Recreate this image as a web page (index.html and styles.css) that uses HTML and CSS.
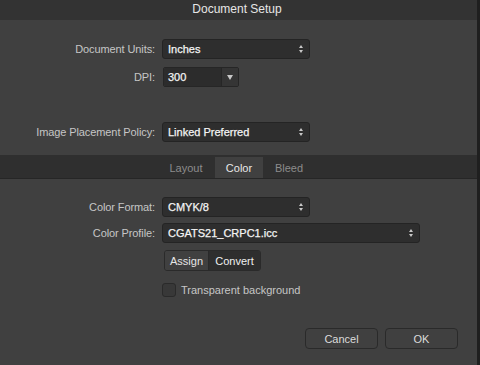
FILE: index.html
```html
<!DOCTYPE html>
<html>
<head>
<meta charset="utf-8">
<link rel="stylesheet" href="styles.css">
</head>
<body>
<div class="window">
  <div class="dialog">
    <div class="titlebar">Document Setup</div>
    <div class="general">
      <div class="row">
        <span class="label">Document Units:</span>
        <div class="select w148"><span>Inches</span><span class="updown"><i class="up"></i><i class="down"></i></span></div>
      </div>
      <div class="row r-dpi">
        <span class="label">DPI:</span>
        <div class="combo"><span class="field">300</span><span class="drop"><i class="tri"></i></span></div>
      </div>
      <div class="row r-policy">
        <span class="label">Image Placement Policy:</span>
        <div class="select w148"><span>Linked Preferred</span><span class="updown"><i class="up"></i><i class="down"></i></span></div>
      </div>
    </div>
    <div class="tabbar">
      <span class="tab">Layout</span>
      <span class="tab active">Color</span>
      <span class="tab">Bleed</span>
    </div>
    <div class="colorpane">
      <div class="row">
        <span class="label">Color Format:</span>
        <div class="select w148"><span>CMYK/8</span><span class="updown"><i class="up"></i><i class="down"></i></span></div>
      </div>
      <div class="row r-profile">
        <span class="label">Color Profile:</span>
        <div class="select w258"><span>CGATS21_CRPC1.icc</span><span class="updown"><i class="up"></i><i class="down"></i></span></div>
      </div>
      <div class="row r-seg">
        <span class="label"></span>
        <div class="segmented"><span class="seg">Assign</span><span class="seg on">Convert</span></div>
      </div>
      <div class="row r-check">
        <span class="label"></span>
        <label class="check"><span class="box"></span><span>Transparent background</span></label>
      </div>
    </div>
    <div class="footer">
      <span class="btn">Cancel</span>
      <span class="btn">OK</span>
    </div>
  </div>
  <div class="edge"></div>
</div>
</body>
</html>
```

FILE: styles.css
```css
* { box-sizing: border-box; }
html, body { margin: 0; padding: 0; }
body {
  width: 480px;
  height: 365px;
  overflow: hidden;
  background: #404040;
  font-family: "Liberation Sans", Arial, sans-serif;
  font-size: 11px;
  color: #c9c9c9;
}
.window { display: flex; width: 480px; height: 365px; }
.dialog { width: 477px; display: flex; flex-direction: column; background: #404040; }
.edge { width: 3px; background: #1f1f1f; }
.titlebar {
  height: 20px;
  background: #333333;
  color: #e6e6e6;
  font-size: 12px;
  display: flex;
  align-items: center;
  justify-content: center;
  padding-right: 3px;
  padding-bottom: 2px;
}
.general { padding-top: 19px; height: 135px; }
.row {
  display: flex;
  align-items: center;
  height: 20px;
}
.label {
  width: 155px;
  text-align: right;
  margin-right: 7px;
  color: #c6c6c6;
  letter-spacing: -0.1px;
}
.r-dpi { margin-top: 8px; }
.r-policy { margin-top: 35px; }
.select {
  height: 20px;
  background: #2e2e2e;
  border: 1px solid #242424;
  border-radius: 3px;
  display: flex;
  align-items: center;
  justify-content: space-between;
  padding: 0 6px 0 5px;
  color: #f4f4f4;
  font-size: 11px;
  -webkit-text-stroke: 0.25px #f4f4f4;
}
.w148 { width: 148px; }
.w258 { width: 258px; }
.updown { display: flex; flex-direction: column; gap: 2px; align-items: center; }
.updown i { display: block; width: 0; height: 0; border-left: 2px solid transparent; border-right: 2px solid transparent; }
.updown .up { border-bottom: 3px solid #c8c8c8; }
.updown .down { border-top: 3px solid #c8c8c8; }
.combo {
  display: flex;
  height: 20px;
  margin-left: 1px;
  border: 1px solid #262626;
  border-radius: 2px;
  overflow: hidden;
}
.combo .field {
  width: 57px;
  background: #2c2c2c;
  color: #f4f4f4;
  -webkit-text-stroke: 0.25px #f4f4f4;
  display: flex;
  align-items: center;
  padding-left: 4px;
}
.combo .drop {
  width: 17px;
  background: #353535;
  border-left: 1px solid #262626;
  display: flex;
  align-items: center;
  justify-content: center;
}
.tri { display: block; width: 0; height: 0; border-left: 3px solid transparent; border-right: 3px solid transparent; border-top: 5px solid #c8c8c8; }
.tabbar {
  height: 24px;
  background: #2f2f2f;
  border-bottom: 1px solid #262626;
  display: flex;
  align-items: flex-end;
  padding-left: 157px;
}
.tab {
  width: 58px;
  height: 21px;
  display: flex;
  align-items: center;
  justify-content: center;
  color: #8c8c8c;
  font-size: 11px;
}
.tab:last-child { width: 52px; }
.tab.active { width: 48px; background: #404040; color: #e8e8e8; }
.colorpane { padding-top: 18px; }
.r-profile { margin-top: 6px; }
.r-seg { margin-top: 7px; height: 21px; }
.segmented {
  display: flex;
  height: 21px;
  margin-left: 2px;
  border: 1px solid #2a2a2a;
  border-radius: 3px;
  overflow: hidden;
}
.seg { display: flex; align-items: center; justify-content: center; color: #e6e6e6; }
.seg:first-child { width: 44px; background: #404040; border-right: 1px solid #2a2a2a; }
.seg.on { width: 51px; background: #2e2e2e; color: #f0f0f0; }
.r-check { margin-top: 9px; }
.check { display: flex; align-items: center; gap: 5px; color: #c6c6c6; }
.box {
  width: 14px;
  height: 14px;
  background: #383838;
  border: 1px solid #2a2a2a;
  border-radius: 3px;
}
.footer {
  display: flex;
  justify-content: flex-end;
  gap: 7px;
  padding-right: 19px;
  padding-top: 28px;
}
.btn {
  width: 73px;
  height: 21px;
  border: 1px solid #2a2a2a;
  border-radius: 4px;
  background: #404040;
  color: #dcdcdc;
  display: flex;
  align-items: center;
  justify-content: center;
}
```
